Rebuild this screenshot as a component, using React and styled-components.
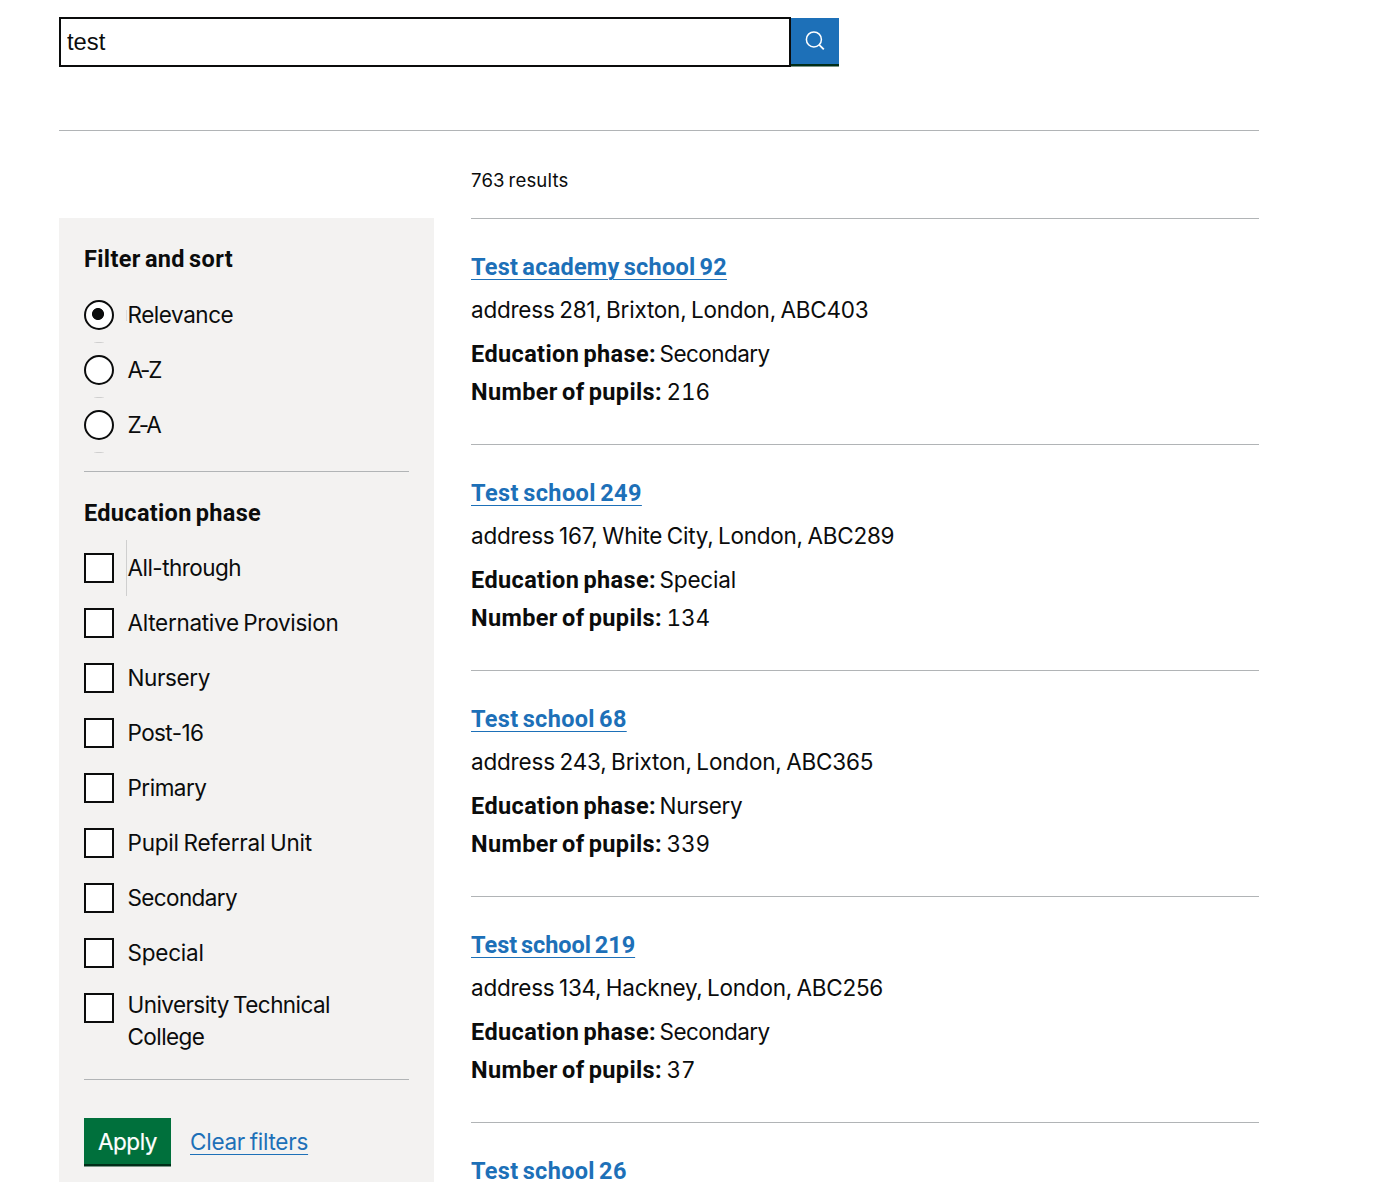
import React from 'react';
import styled, { createGlobalStyle, css } from 'styled-components';

const ink = '#0b0c0c';
const blue = '#1d70b8';
const line = '#b1b4b6';

const GlobalStyle = createGlobalStyle`
  *, *::before, *::after { box-sizing: border-box; }
  body { margin: 0; background: #fff; color: ${ink}; }
`;

const regular = css`
  font-family: Inter, "Liberation Sans", sans-serif;
  font-size: 22.5px;
  font-weight: 400;
  letter-spacing: ${(p) => p.$track || 0}px;
  word-spacing: -1.5px;
`;

const bold = css`
  font-family: Roboto, "Liberation Sans", sans-serif;
  font-size: 23.5px;
  font-weight: 700;
  letter-spacing: ${(p) => p.$track || 0}px;
  word-spacing: -2px;
`;

const Page = styled.main`
  height: 1182px;
  overflow: hidden;
  padding: 17px 0 0 59px;
`;

const Container = styled.div`
  width: 1200px;
`;

const SearchForm = styled.form`
  display: flex;
  align-items: flex-start;
  height: 113px;
`;

const SearchInput = styled.input`
  width: 732px;
  height: 50px;
  padding: 0 5px 0 6px;
  border: 2px solid ${ink};
  border-radius: 0;
  outline: 0;
  color: ${ink};
  font: 23.75px "Liberation Sans", Arial, sans-serif;
`;

const SearchButton = styled.button`
  display: flex;
  align-items: center;
  justify-content: center;
  width: 48px;
  height: 46px;
  margin: 1px 0 0;
  padding: 0;
  border: 0;
  background: ${blue};
  box-shadow: 0 2px 0 #002d18, 0 3px 0 #7b9588;
`;

const Rule = styled.hr`
  height: 1px;
  margin: ${(p) => p.$margin || 0};
  border: 0;
  background: ${line};
`;

const Columns = styled.div`
  display: grid;
  grid-template-columns: 375px 788px;
  column-gap: 37px;
`;

const Sidebar = styled.aside`
  height: 964px;
  margin-top: 87px;
  padding: 26px 25px 0;
  background: #f3f2f1;
`;

const GroupHeading = styled.h2`
  ${bold}
  margin: 0 0 ${(p) => p.$gap}px;
  line-height: 30px;
`;

const Options = styled.div`
  display: flex;
  flex-direction: column;
  gap: 25px;
`;

const Option = styled.label`
  position: relative;
  display: flex;
  align-items: flex-start;
  gap: 13.5px;
  min-height: 30px;
`;

const OptionText = styled.span`
  ${regular}
  margin-top: ${(p) => (p.$lines ? -4 : -1)}px;
  line-height: 32px;
  height: ${(p) => (p.$lines ? 64 : 30)}px;
  white-space: nowrap;
`;

const Checkbox = styled.input.attrs({ type: 'checkbox' })`
  appearance: none;
  flex: none;
  width: 30px;
  height: 30px;
  margin: 0;
  border: 2px solid ${ink};
  background: #fff;
`;

const Radio = styled.input.attrs({ type: 'radio' })`
  appearance: none;
  flex: none;
  width: 30px;
  height: 30px;
  margin: 0;
  border: 2px solid ${ink};
  border-radius: 50%;
  background: #fff;
  &:checked {
    background: radial-gradient(circle at 12px 12px, ${ink} 5.6px, #fff 6.4px);
  }
`;

const RadioTick = styled.i`
  position: absolute;
  left: 10px;
  top: 42px;
  width: 10px;
  height: 1px;
  background: linear-gradient(90deg, #e6e5e4, #cfcfcf 30%, #cfcfcf 70%, #e6e5e4);
`;

const LabelEdge = styled.i`
  position: absolute;
  left: 42px;
  top: ${(p) => p.$top}px;
  width: 1px;
  height: ${(p) => p.$height}px;
  background: ${(p) => p.$color};
`;

const Actions = styled.div`
  display: flex;
  align-items: flex-start;
  gap: 19px;
`;

const ApplyButton = styled.button`
  ${regular}
  width: 87px;
  height: 46px;
  padding: 2px 0 0;
  border: 0;
  background: #00703c;
  box-shadow: 0 2px 0 #002d18, 0 3px 0 #7b9588;
  color: #fff;
  line-height: 44px;
  -webkit-text-stroke: 0.2px #fff;
`;

const underline = css`
  color: ${blue};
  text-decoration: underline;
  text-decoration-thickness: 1px;
  text-underline-offset: 4px;
`;

const ClearLink = styled.a`
  ${regular}
  ${underline}
  line-height: 48px;
  white-space: nowrap;
`;

const Results = styled.section`
  display: flex;
  flex-direction: column;
`;

const Count = styled.p`
  ${regular}
  font-size: 18.6px;
  height: 87px;
  margin: 0;
  padding-top: 34px;
  line-height: 30px;
`;

const Result = styled.article`
  height: 226px;
  padding-top: 33px;
  border-top: 1px solid ${line};

  &:last-child {
    height: 60px;
  }
`;

const Title = styled.h3`
  ${bold}
  margin: 0 0 13px;
  line-height: 30px;
`;

const TitleLink = styled.a`
  ${underline}
`;

const Address = styled.p`
  ${regular}
  margin: 0 0 10px;
  line-height: 30px;
  white-space: nowrap;
`;

const Fact = styled.div`
  display: flex;
  gap: ${(p) => p.$gap}px;
  height: 38px;
  line-height: 38px;
`;

const Term = styled.strong`
  ${bold}
`;

const Value = styled.span`
  ${regular}
  font-variant-numeric: tabular-nums;
`;

const phases = [
  ['All-through', -0.53],
  ['Alternative Provision', -0.29],
  ['Nursery', -0.4],
  ['Post-16', -0.6],
  ['Primary', -0.5],
  ['Pupil Referral Unit', -0.2],
  ['Secondary', -0.62],
  ['Special', -0.22],
];

const sorts = [
  ['Relevance', -0.45],
  ['A-Z', -2.2],
  ['Z-A', -2],
];

const schools = [
  { name: 'Test academy school 92', nt: 0.25, address: 'address 281, Brixton, London, ABC403', at: -0.23, phase: 'Secondary', pt: -0.55, pupils: '216' },
  { name: 'Test school 249', nt: 0.42, address: 'address 167, White City, London, ABC289', at: -0.24, phase: 'Special', pt: -0.2, pupils: '134' },
  { name: 'Test school 68', nt: 0.33, address: 'address 243, Brixton, London, ABC365', at: -0.19, phase: 'Nursery', pt: -0.35, pupils: '339' },
  { name: 'Test school 219', nt: -0.03, address: 'address 134, Hackney, London, ABC256', at: -0.25, phase: 'Secondary', pt: -0.55, pupils: '37' },
  { name: 'Test school 26', nt: 0.33 },
];

function SearchIcon() {
  return (
    <svg width="22" height="22" viewBox="0 0 22 22" fill="none" stroke="#fff" strokeWidth="1.5">
      <circle cx="9.9" cy="9.4" r="7.5" />
      <path d="M15 14.6L19.8 19.4" strokeWidth="1.8" />
    </svg>
  );
}

export default function App() {
  return (
    <Page>
      <GlobalStyle />
      <Container>
        <SearchForm>
          <SearchInput defaultValue="test" aria-label="Search" />
          <SearchButton type="button" aria-label="Search">
            <SearchIcon />
          </SearchButton>
        </SearchForm>
        <Rule />
        <Columns>
          <Sidebar>
            <GroupHeading $gap={26} $track={0.35}>Filter and sort</GroupHeading>
            <Options>
              {sorts.map(([name, track], i) => (
                <Option key={name}>
                  <Radio name="sort" defaultChecked={i === 0} />
                  <OptionText $track={track}>{name}</OptionText>
                  {i === 0 && <LabelEdge $top={10} $height={11} $color="#dddddf" />}
                  <RadioTick />
                </Option>
              ))}
            </Options>
            <Rule $margin="31px 0 26px" />
            <GroupHeading $gap={25} $track={0.31}>Education phase</GroupHeading>
            <Options>
              {phases.map(([name, track], i) => (
                <Option key={name}>
                  <Checkbox />
                  <OptionText $track={track}>{name}</OptionText>
                  {i === 0 && <LabelEdge $top={-13} $height={56} $color="#cfcfcf" />}
                </Option>
              ))}
              <Option>
                <Checkbox />
                <OptionText $track={-0.57} $lines>
                  University Technical
                  <br />
                  College
                </OptionText>
              </Option>
            </Options>
            <Rule $margin="26px 0 38px" />
            <Actions>
              <ApplyButton type="button" $track={-0.45}>Apply</ApplyButton>
              <ClearLink $track={-0.25}>Clear filters</ClearLink>
            </Actions>
          </Sidebar>
          <Results>
            <Count $track={0.15}>763 results</Count>
            {schools.map((s) => (
              <Result key={s.name}>
                <Title $track={s.nt}>
                  <TitleLink>{s.name}</TitleLink>
                </Title>
                {s.address && (
                  <>
                    <Address $track={s.at}>{s.address}</Address>
                    <Fact $gap={3.5}>
                      <Term $track={0.38}>Education phase:</Term>
                      <Value $track={s.pt}>{s.phase}</Value>
                    </Fact>
                    <Fact $gap={4.5}>
                      <Term $track={0.37}>Number of pupils:</Term>
                      <Value $track={-0.1}>{s.pupils}</Value>
                    </Fact>
                  </>
                )}
              </Result>
            ))}
          </Results>
        </Columns>
      </Container>
    </Page>
  );
}
